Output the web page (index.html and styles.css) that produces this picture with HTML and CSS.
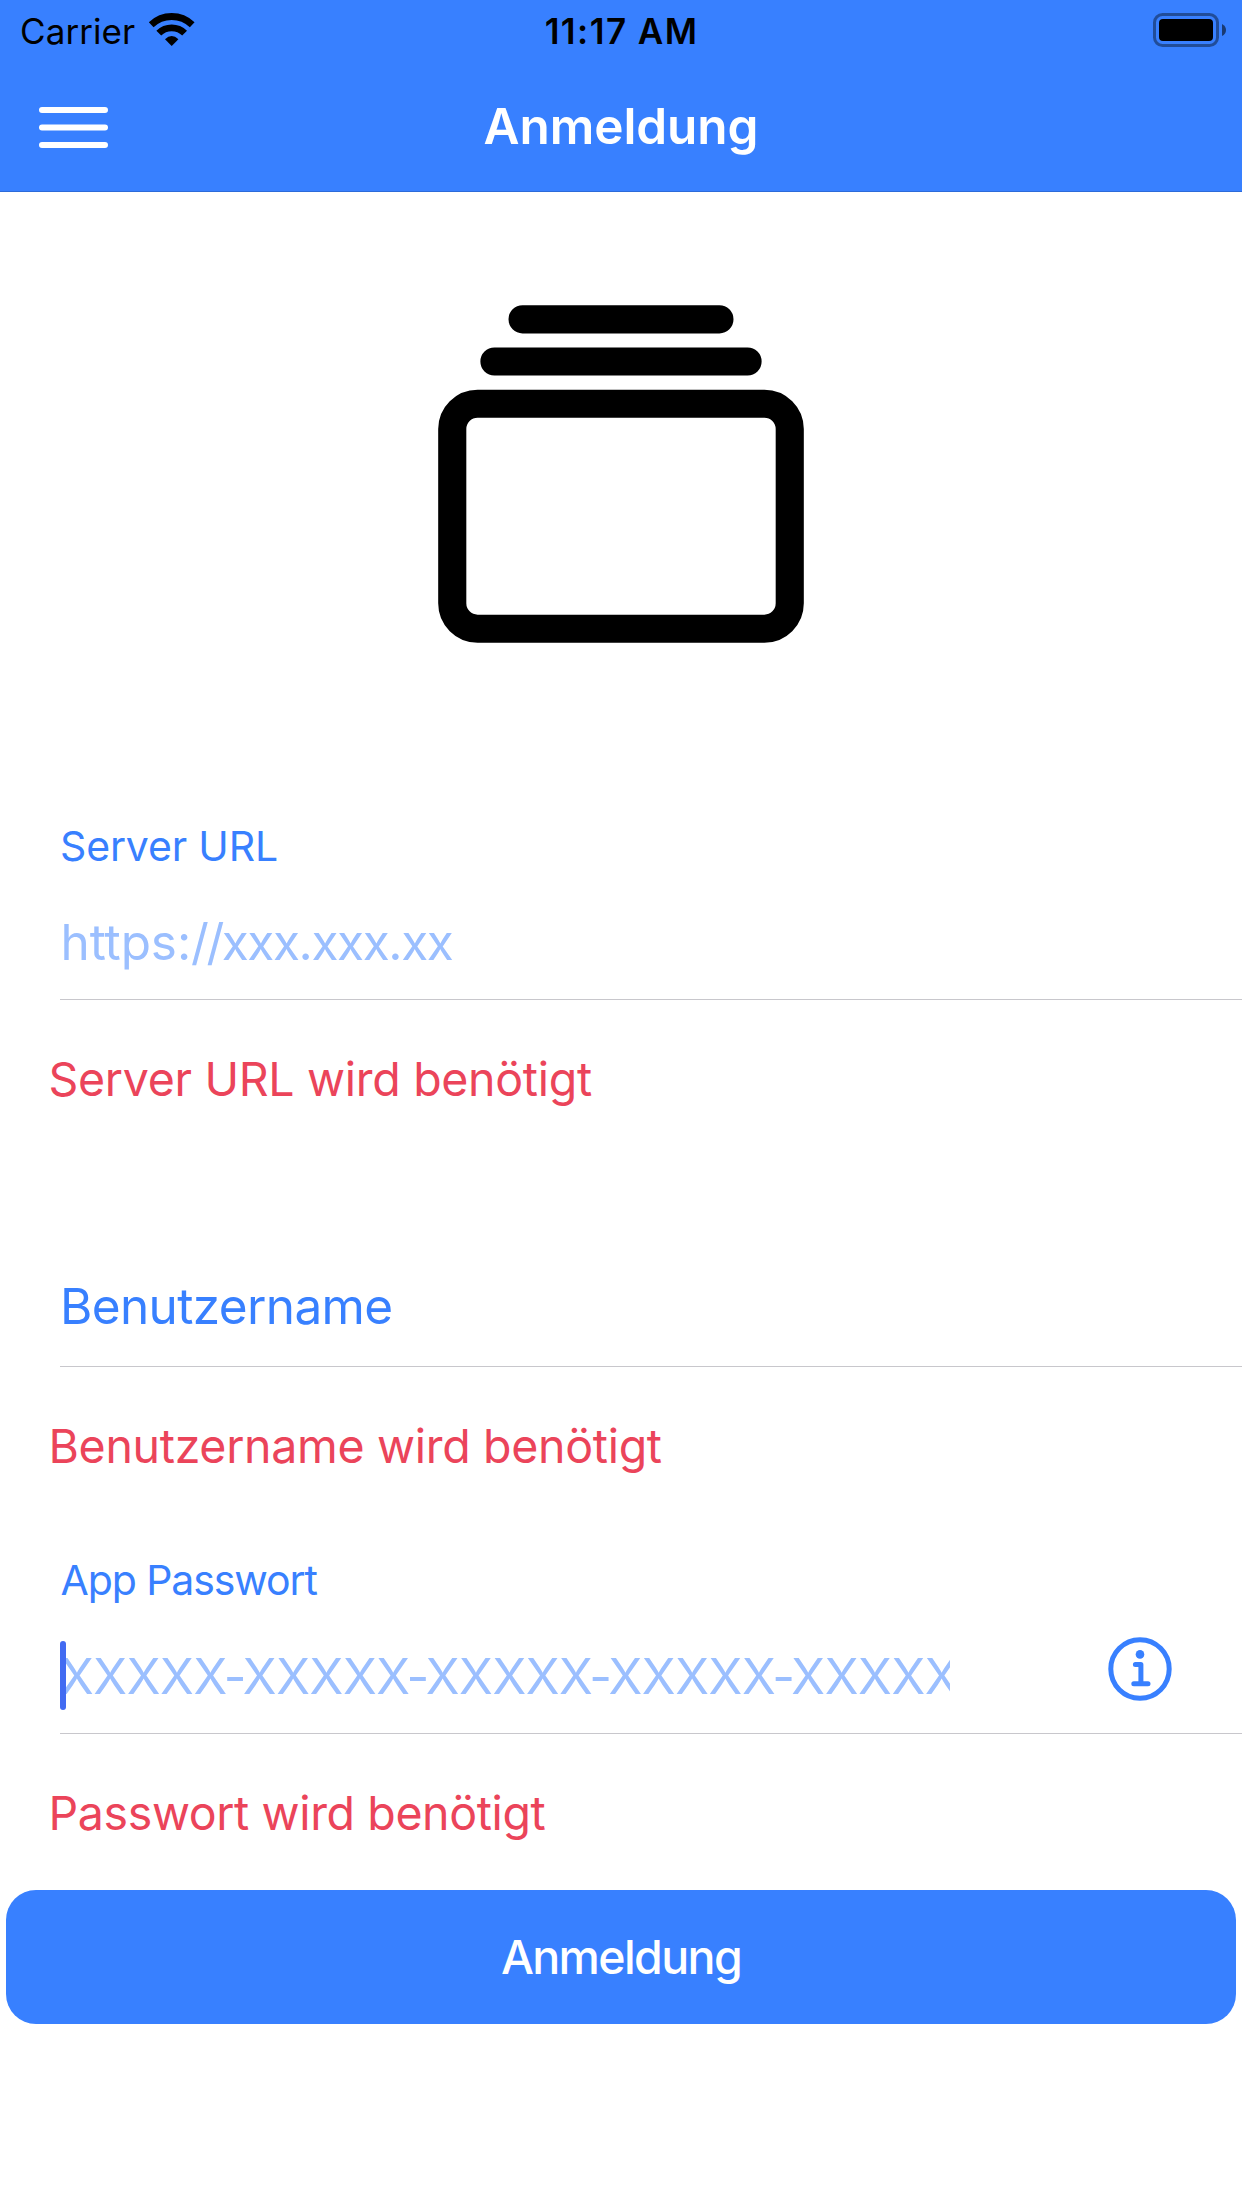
FILE: index.html
```html
<!DOCTYPE html>
<html lang="de">
<head>
<meta charset="utf-8">
<title>Anmeldung</title>
<link rel="stylesheet" href="styles.css">
</head>
<body>
<header class="header">
  <div class="status-bar">
    <div class="status-left">
      <span class="carrier">Carrier</span>
      <svg class="wifi" width="48" height="36" viewBox="148 12 48 36">
        <path d="M151.2 24.8A29.5 29.5 0 0 1 192.2 24.8M158.8 33.2A18.2 18.2 0 0 1 184.6 33.2" fill="none" stroke="#000" stroke-width="6.8"/>
        <path d="M171.7 46L165 39.2Q171.7 33 178.4 39.2Z"/>
      </svg>
    </div>
    <span class="time">11:17 AM</span>
    <div class="status-right">
      <svg class="battery" width="74" height="34" viewBox="0 0 74 34">
        <rect x="1.5" y="1.5" width="63" height="31" rx="8" fill="none" stroke="#000" stroke-opacity=".4" stroke-width="3"/>
        <rect x="6" y="6" width="54" height="22" rx="4"/>
        <path d="M69 11Q73 13 73 17T69 23Z" fill-opacity=".55"/>
      </svg>
    </div>
  </div>
  <div class="toolbar">
    <svg class="menu" width="72" height="42" viewBox="0 0 72 42">
      <path d="M4 3H67M4 20.5H67M4 38H67" stroke="#fff" stroke-width="6" stroke-linecap="round"/>
    </svg>
    <h1 class="title">Anmeldung</h1>
  </div>
</header>
<main class="content">
  <svg class="logo" viewBox="0 0 512 512" fill="none" stroke="#000" stroke-width="32" stroke-linecap="round">
    <rect x="64" y="176" width="384" height="256" rx="28.87"/>
    <path d="M144 80H368M112 128H400"/>
  </svg>
  <section class="field">
    <label class="label">Server URL</label>
    <div class="input url"><span class="scheme">https:</span><span class="slashes">//</span>xxx.xxx.xx</div>
  </section>
  <p class="error">Server URL wird benötigt</p>
  <section class="field empty">
    <label class="input-label">Benutzername</label>
  </section>
  <p class="error">Benutzername wird benötigt</p>
  <section class="field password">
    <div class="stack">
      <label class="label app-label">App Passwort</label>
      <div class="input-wrap">
        <div class="input pass">XXXXX<span class="dash">-</span>XXXXX<span class="dash">-</span>XXXXX<span class="dash">-</span>XXXXX<span class="dash">-</span>XXXXX</div>
        <span class="caret"></span>
      </div>
    </div>
    <svg class="info" width="66" height="66" viewBox="-33 -33 66 66" fill="none" stroke="#3880ff" stroke-width="5">
      <circle r="29.2"/>
      <path d="M-4.6-4.6H.9V14.7M-6.2 14.7H8" stroke-linecap="round" stroke-linejoin="round"/>
      <circle cy="-14.6" r="4.3" fill="#3880ff" stroke="none"/>
    </svg>
  </section>
  <p class="error">Passwort wird benötigt</p>
  <button class="submit">Anmeldung</button>
</main>
</body>
</html>
```
FILE: styles.css
```css
* { box-sizing: border-box; }
body {
  margin: 0;
  background: #fff;
  color: #000;
  font-family: Inter, "Liberation Sans", sans-serif;
}
.header {
  height: 192px;
  background: #3880ff;
  border-bottom: 1px solid #2c6bd9;
}
.status-bar {
  display: grid;
  grid-template-columns: 1fr auto 1fr;
  height: 60px;
  padding: 1px 15px 0 20px;
  font-size: 35px;
  line-height: 60px;
}
.status-left { display: flex; }
.carrier { letter-spacing: .08px; }
.wifi { margin: 11px 0 0 13px; }
.time { font-weight: 600; letter-spacing: 1.43px; margin-right: 4px; }
.status-right { display: flex; justify-content: flex-end; }
.battery { margin-top: 12px; }
.toolbar {
  display: grid;
  grid-template-columns: 1fr auto 1fr;
  height: 132px;
  padding-left: 38px;
}
.toolbar::after { content: ""; width: 37px; }
.menu { margin-top: 47px; }
.title {
  margin: 0 38px 0 0;
  font-size: 49.5px;
  font-weight: 600;
  line-height: 132px;
  letter-spacing: -.07px;
  color: #fff;
}
.content { padding-top: 57px; }
.logo { display: block; width: 450px; height: 450px; margin: 0 auto 117px; }
.field {
  margin-left: 60px;
  height: 184px;
  border-bottom: 1px solid #c8c7cc;
  color: #3880ff;
}
.label {
  display: block;
  height: 60px;
  font-size: 41px;
  line-height: 60px;
  letter-spacing: -.15px;
}
.app-label { padding-left: .5px; letter-spacing: -1.1px; }
.input {
  margin-top: 36px;
  height: 60px;
  font-size: 49.5px;
  line-height: 60px;
  letter-spacing: -1.4px;
  white-space: nowrap;
  color: #9bbfff;
}
.url { padding-left: .5px; }
.scheme { letter-spacing: -.1px; }
.slashes { letter-spacing: -2.5px; }
.empty { height: 91px; margin-top: 167px; }
.input-label {
  display: block;
  font-size: 49.5px;
  line-height: 60px;
  letter-spacing: -.63px;
}
.error {
  margin: 49px 0 0 48.5px;
  font-size: 46.5px;
  line-height: 60px;
  letter-spacing: -.31px;
  color: #eb445a;
}
.password { display: flex; margin-top: 74px; }
.password + .error { letter-spacing: -.38px; }
.stack { width: 890px; }
.input-wrap { position: relative; }
.pass { overflow: hidden; letter-spacing: -.4px; }
.dash { margin: 0 -3.2px; }
.caret {
  position: absolute;
  left: 0;
  top: -5px;
  width: 6px;
  height: 69px;
  border-radius: 3px;
  background: #426bf2;
}
.info { margin: 85.5px 0 0 157px; }
.submit {
  display: block;
  width: 1230px;
  height: 134px;
  margin: 47px auto 0;
  padding: 0 0 1px;
  border: 0;
  border-radius: 30px;
  background: #3880ff;
  color: #fff;
  font: 500 46.5px/60px Inter, "Liberation Sans", sans-serif;
  letter-spacing: -1.62px;
}
```
